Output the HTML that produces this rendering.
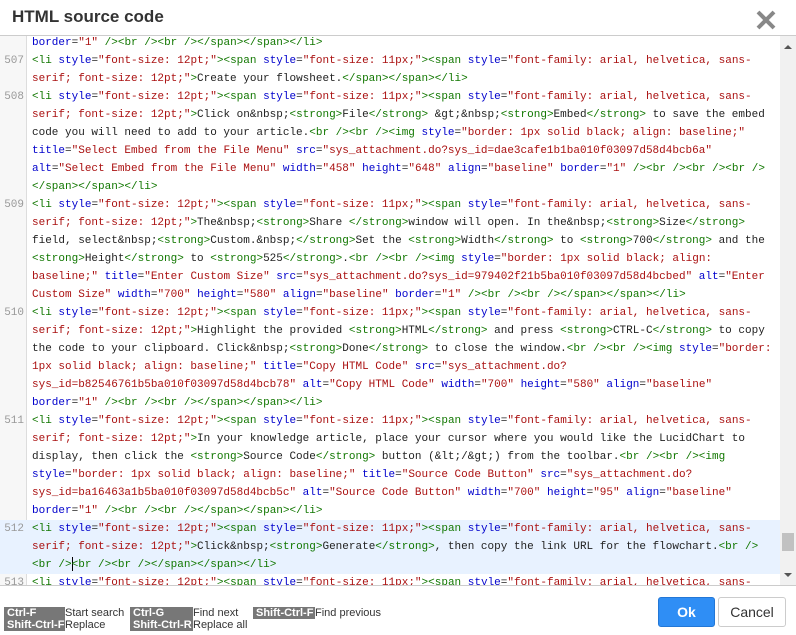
<!DOCTYPE html>
<html><head><meta charset="utf-8"><style>
*{margin:0;padding:0;box-sizing:border-box}
body{width:796px;height:635px;background:#fff;position:relative;overflow:hidden;font-family:"Liberation Sans",Arial,sans-serif}
.title{position:absolute;left:12px;top:7px;font-size:17px;font-weight:bold;color:#333}
.close{position:absolute;left:754px;top:8px;width:24px;height:24px}
.hr{position:absolute;left:0;top:35px;width:796px;height:1px;background:#ccc}
.editor{position:absolute;left:0;top:36px;width:796px;height:550px;overflow:hidden;border-bottom:1px solid #ccc}
.gut{position:absolute;left:0;top:0;width:27px;height:100%;background:#f7f7f7;border-right:1px solid #ddd}
.code{position:absolute;left:0;top:-2px;width:780px;font-family:"Liberation Mono",monospace;font-size:11px;color:#222}
.l{height:18px;line-height:18px;white-space:pre;padding-left:32px;position:relative}
.l.hl{background:#e8f2ff}
.n{position:absolute;left:0;width:24px;text-align:right;color:#999;top:0}
g{color:#170}o{color:#00c}r{color:#a11}
.sb{position:absolute;left:780px;top:0;width:16px;height:100%;background:#f1f1f1}
.thumb{position:absolute;left:782px;top:497px;width:12px;height:18px;background:#c1c1c1}
.cur{display:inline-block;width:1px;height:14px;background:#000;vertical-align:middle;margin-right:-1px}
.k{position:absolute;background:#777;color:#fff;font-weight:bold;font-size:11px;line-height:12px;padding-left:3px}
.kt{position:absolute;font-size:11px;color:#333;line-height:12px}
.btn{position:absolute;top:597px;height:30px;border-radius:3px;font-size:14px;text-align:center;line-height:28px}
</style></head><body>
<div class="title">HTML source code</div>
<svg class="close" viewBox="0 0 24 24"><path d="M4 4L20 20M20 4L4 20" stroke="#888" stroke-width="4"/></svg>
<div class="hr"></div>
<div class="editor">
<div class="gut"></div>
<div class="code">
<div class="l"><o>border</o>=<r>"1"</r> <g>/&gt;&lt;br</g> <g>/&gt;&lt;br</g> <g>/&gt;&lt;/span&gt;&lt;/span&gt;&lt;/li&gt;</g></div>
<div class="l"><span class="n">507</span><g>&lt;li</g> <o>style</o>=<r>"font-size: 12pt;"</r><g>&gt;&lt;span</g> <o>style</o>=<r>"font-size: 11px;"</r><g>&gt;&lt;span</g> <o>style</o>=<r>"font-family: arial, helvetica, sans-</r></div>
<div class="l"><r>serif; font-size: 12pt;"</r><g>&gt;</g>Create your flowsheet.<g>&lt;/span&gt;&lt;/span&gt;&lt;/li&gt;</g></div>
<div class="l"><span class="n">508</span><g>&lt;li</g> <o>style</o>=<r>"font-size: 12pt;"</r><g>&gt;&lt;span</g> <o>style</o>=<r>"font-size: 11px;"</r><g>&gt;&lt;span</g> <o>style</o>=<r>"font-family: arial, helvetica, sans-</r></div>
<div class="l"><r>serif; font-size: 12pt;"</r><g>&gt;</g>Click on&amp;nbsp;<g>&lt;strong&gt;</g>File<g>&lt;/strong&gt;</g> &amp;gt;&amp;nbsp;<g>&lt;strong&gt;</g>Embed<g>&lt;/strong&gt;</g> to save the embed</div>
<div class="l">code you will need to add to your article.<g>&lt;br</g> <g>/&gt;&lt;br</g> <g>/&gt;&lt;img</g> <o>style</o>=<r>"border: 1px solid black; align: baseline;"</r></div>
<div class="l"><o>title</o>=<r>"Select Embed from the File Menu"</r> <o>src</o>=<r>"sys_attachment.do?sys_id=dae3cafe1b1ba010f03097d58d4bcb6a"</r></div>
<div class="l"><o>alt</o>=<r>"Select Embed from the File Menu"</r> <o>width</o>=<r>"458"</r> <o>height</o>=<r>"648"</r> <o>align</o>=<r>"baseline"</r> <o>border</o>=<r>"1"</r> <g>/&gt;&lt;br</g> <g>/&gt;&lt;br</g> <g>/&gt;&lt;br</g> <g>/&gt;</g></div>
<div class="l"><g>&lt;/span&gt;&lt;/span&gt;&lt;/li&gt;</g></div>
<div class="l"><span class="n">509</span><g>&lt;li</g> <o>style</o>=<r>"font-size: 12pt;"</r><g>&gt;&lt;span</g> <o>style</o>=<r>"font-size: 11px;"</r><g>&gt;&lt;span</g> <o>style</o>=<r>"font-family: arial, helvetica, sans-</r></div>
<div class="l"><r>serif; font-size: 12pt;"</r><g>&gt;</g>The&amp;nbsp;<g>&lt;strong&gt;</g>Share <g>&lt;/strong&gt;</g>window will open. In the&amp;nbsp;<g>&lt;strong&gt;</g>Size<g>&lt;/strong&gt;</g></div>
<div class="l">field, select&amp;nbsp;<g>&lt;strong&gt;</g>Custom.&amp;nbsp;<g>&lt;/strong&gt;</g>Set the <g>&lt;strong&gt;</g>Width<g>&lt;/strong&gt;</g> to <g>&lt;strong&gt;</g>700<g>&lt;/strong&gt;</g> and the</div>
<div class="l"><g>&lt;strong&gt;</g>Height<g>&lt;/strong&gt;</g> to <g>&lt;strong&gt;</g>525<g>&lt;/strong&gt;</g>.<g>&lt;br</g> <g>/&gt;&lt;br</g> <g>/&gt;&lt;img</g> <o>style</o>=<r>"border: 1px solid black; align:</r></div>
<div class="l"><r>baseline;"</r> <o>title</o>=<r>"Enter Custom Size"</r> <o>src</o>=<r>"sys_attachment.do?sys_id=979402f21b5ba010f03097d58d4bcbed"</r> <o>alt</o>=<r>"Enter</r></div>
<div class="l"><r>Custom Size"</r> <o>width</o>=<r>"700"</r> <o>height</o>=<r>"580"</r> <o>align</o>=<r>"baseline"</r> <o>border</o>=<r>"1"</r> <g>/&gt;&lt;br</g> <g>/&gt;&lt;br</g> <g>/&gt;&lt;/span&gt;&lt;/span&gt;&lt;/li&gt;</g></div>
<div class="l"><span class="n">510</span><g>&lt;li</g> <o>style</o>=<r>"font-size: 12pt;"</r><g>&gt;&lt;span</g> <o>style</o>=<r>"font-size: 11px;"</r><g>&gt;&lt;span</g> <o>style</o>=<r>"font-family: arial, helvetica, sans-</r></div>
<div class="l"><r>serif; font-size: 12pt;"</r><g>&gt;</g>Highlight the provided <g>&lt;strong&gt;</g>HTML<g>&lt;/strong&gt;</g> and press <g>&lt;strong&gt;</g>CTRL-C<g>&lt;/strong&gt;</g> to copy</div>
<div class="l">the code to your clipboard. Click&amp;nbsp;<g>&lt;strong&gt;</g>Done<g>&lt;/strong&gt;</g> to close the window.<g>&lt;br</g> <g>/&gt;&lt;br</g> <g>/&gt;&lt;img</g> <o>style</o>=<r>"border:</r></div>
<div class="l"><r>1px solid black; align: baseline;"</r> <o>title</o>=<r>"Copy HTML Code"</r> <o>src</o>=<r>"sys_attachment.do?</r></div>
<div class="l"><r>sys_id=b82546761b5ba010f03097d58d4bcb78"</r> <o>alt</o>=<r>"Copy HTML Code"</r> <o>width</o>=<r>"700"</r> <o>height</o>=<r>"580"</r> <o>align</o>=<r>"baseline"</r></div>
<div class="l"><o>border</o>=<r>"1"</r> <g>/&gt;&lt;br</g> <g>/&gt;&lt;br</g> <g>/&gt;&lt;/span&gt;&lt;/span&gt;&lt;/li&gt;</g></div>
<div class="l"><span class="n">511</span><g>&lt;li</g> <o>style</o>=<r>"font-size: 12pt;"</r><g>&gt;&lt;span</g> <o>style</o>=<r>"font-size: 11px;"</r><g>&gt;&lt;span</g> <o>style</o>=<r>"font-family: arial, helvetica, sans-</r></div>
<div class="l"><r>serif; font-size: 12pt;"</r><g>&gt;</g>In your knowledge article, place your cursor where you would like the LucidChart to</div>
<div class="l">display, then click the <g>&lt;strong&gt;</g>Source Code<g>&lt;/strong&gt;</g> button (&amp;lt;/&amp;gt;) from the toolbar.<g>&lt;br</g> <g>/&gt;&lt;br</g> <g>/&gt;&lt;img</g></div>
<div class="l"><o>style</o>=<r>"border: 1px solid black; align: baseline;"</r> <o>title</o>=<r>"Source Code Button"</r> <o>src</o>=<r>"sys_attachment.do?</r></div>
<div class="l"><r>sys_id=ba16463a1b5ba010f03097d58d4bcb5c"</r> <o>alt</o>=<r>"Source Code Button"</r> <o>width</o>=<r>"700"</r> <o>height</o>=<r>"95"</r> <o>align</o>=<r>"baseline"</r></div>
<div class="l"><o>border</o>=<r>"1"</r> <g>/&gt;&lt;br</g> <g>/&gt;&lt;br</g> <g>/&gt;&lt;/span&gt;&lt;/span&gt;&lt;/li&gt;</g></div>
<div class="l hl"><span class="n">512</span><g>&lt;li</g> <o>style</o>=<r>"font-size: 12pt;"</r><g>&gt;&lt;span</g> <o>style</o>=<r>"font-size: 11px;"</r><g>&gt;&lt;span</g> <o>style</o>=<r>"font-family: arial, helvetica, sans-</r></div>
<div class="l hl"><r>serif; font-size: 12pt;"</r><g>&gt;</g>Click&amp;nbsp;<g>&lt;strong&gt;</g>Generate<g>&lt;/strong&gt;</g>, then copy the link URL for the flowchart.<g>&lt;br</g> <g>/&gt;</g></div>
<div class="l hl"><g>&lt;br</g> <g>/&gt;<span class="cur"></span>&lt;br</g> <g>/&gt;&lt;br</g> <g>/&gt;&lt;/span&gt;&lt;/span&gt;&lt;/li&gt;</g></div>
<div class="l"><span class="n">513</span><g>&lt;li</g> <o>style</o>=<r>"font-size: 12pt;"</r><g>&gt;&lt;span</g> <o>style</o>=<r>"font-size: 11px;"</r><g>&gt;&lt;span</g> <o>style</o>=<r>"font-family: arial, helvetica, sans-</r></div>
</div>
<div class="sb"></div>
<div class="thumb"></div>
<svg style="position:absolute;left:783px;top:8px" width="10" height="6"><path d="M1 5L5 1L9 5Z" fill="#555"/></svg>
<svg style="position:absolute;left:783px;top:536px" width="10" height="6"><path d="M1 1L5 5L9 1Z" fill="#555"/></svg>
</div>
<div class="k" style="left:4px;top:607px;width:61px">Ctrl-F</div>
<div class="k" style="left:4px;top:619px;width:61px">Shift-Ctrl-F</div>
<div class="kt" style="left:65px;top:607px">Start search</div>
<div class="kt" style="left:65px;top:619px">Replace</div>
<div class="k" style="left:130px;top:607px;width:63px">Ctrl-G</div>
<div class="k" style="left:130px;top:619px;width:63px">Shift-Ctrl-R</div>
<div class="kt" style="left:193px;top:607px">Find next</div>
<div class="kt" style="left:193px;top:619px">Replace all</div>
<div class="k" style="left:253px;top:607px;width:62px">Shift-Ctrl-F</div>
<div class="kt" style="left:315px;top:607px">Find previous</div>
<div class="btn" style="left:658px;width:57px;background:#2f8ef5;border:1px solid #2377d6;color:#fff;font-weight:bold">Ok</div>
<div class="btn" style="left:718px;width:68px;background:#fff;border:1px solid #ccc;color:#333">Cancel</div>
</body></html>
